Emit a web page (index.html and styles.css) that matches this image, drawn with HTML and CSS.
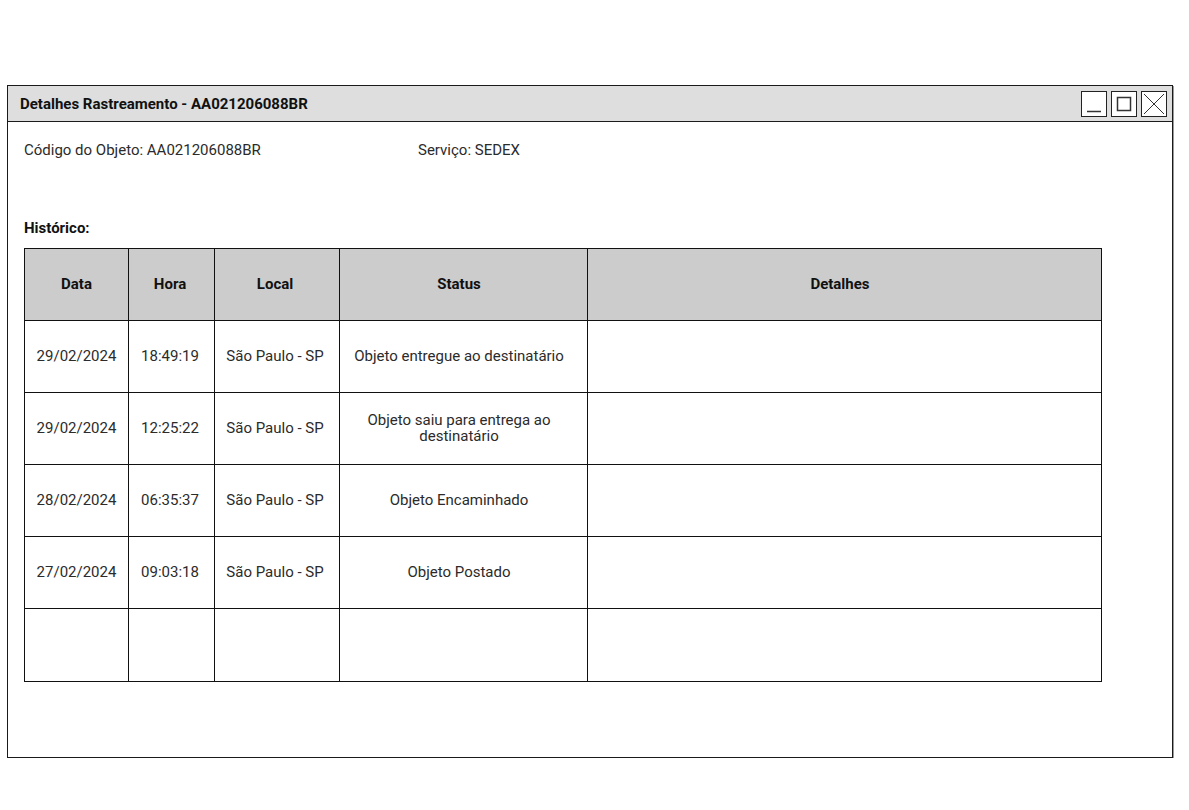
FILE: index.html
```html
<!DOCTYPE html>
<html lang="pt-BR">
<head>
<meta charset="utf-8">
<title>Detalhes Rastreamento</title>
<link rel="stylesheet" href="styles.css">
</head>
<body>
<div class="window">
  <div class="titlebar">
    <span class="title">Detalhes Rastreamento - AA021206088BR</span>
    <div class="controls">
      <span class="btn"><svg width="24" height="24" viewBox="0 0 24 24"><path d="M5 19.5H19" stroke="#333" stroke-width="1.5" fill="none"/></svg></span>
      <span class="btn"><svg width="24" height="24" viewBox="0 0 24 24"><rect x="5.5" y="5.5" width="13" height="13" stroke="#333" stroke-width="1.5" fill="none"/></svg></span>
      <span class="btn"><svg width="24" height="24" viewBox="0 0 24 24"><path d="M2 2L22 22M22 2L2 22" stroke="#333" stroke-width="1" fill="none"/></svg></span>
    </div>
  </div>
  <div class="content">
    <div class="info">
      <span class="info-code">Código do Objeto: AA021206088BR</span>
      <span class="info-service">Serviço: SEDEX</span>
    </div>
    <div class="section-label">Histórico:</div>
    <table class="history">
      <colgroup>
        <col class="c-data"><col class="c-hora"><col class="c-local"><col class="c-status"><col class="c-det">
      </colgroup>
      <thead>
        <tr><th class="k-data">Data</th><th class="k-hora">Hora</th><th class="k-local">Local</th><th class="k-wide">Status</th><th class="k-wide">Detalhes</th></tr>
      </thead>
      <tbody>
        <tr><td class="k-data">29/02/2024</td><td class="k-hora">18:49:19</td><td class="k-local">São Paulo - SP</td><td class="k-wide">Objeto entregue ao destinatário</td><td class="k-wide"></td></tr>
        <tr><td class="k-data">29/02/2024</td><td class="k-hora">12:25:22</td><td class="k-local">São Paulo - SP</td><td class="k-wide">Objeto saiu para entrega ao destinatário</td><td class="k-wide"></td></tr>
        <tr><td class="k-data">28/02/2024</td><td class="k-hora">06:35:37</td><td class="k-local">São Paulo - SP</td><td class="k-wide">Objeto Encaminhado</td><td class="k-wide"></td></tr>
        <tr><td class="k-data">27/02/2024</td><td class="k-hora">09:03:18</td><td class="k-local">São Paulo - SP</td><td class="k-wide">Objeto Postado</td><td class="k-wide"></td></tr>
        <tr class="last"><td></td><td></td><td></td><td></td><td></td></tr>
      </tbody>
    </table>
  </div>
</div>
</body>
</html>
```

FILE: styles.css
```css
html, body {
  margin: 0;
  padding: 0;
  background: #fff;
}
body {
  font-family: Roboto, "Liberation Sans", Arial, sans-serif;
  color: #2b2b2b;
  padding: 85px 0 0 7px;
}
.window {
  box-sizing: border-box;
  width: 1166px;
  height: 673px;
  border: 1px solid #1a1a1a;
  box-shadow: 1px 1px 0 #9a9a9a;
  display: flex;
  flex-direction: column;
}
.titlebar {
  box-sizing: border-box;
  height: 36px;
  background: #dedede;
  border-bottom: 1px solid #1a1a1a;
  display: flex;
  align-items: center;
  justify-content: space-between;
  padding: 0 5px 0 12px;
}
.title {
  font-size: 15px;
  font-weight: 700;
  color: #111;
}
.controls {
  display: flex;
  gap: 4px;
  margin-top: 1px;
}
.btn {
  display: block;
  width: 24px;
  height: 24px;
  border: 1px solid #222;
  background: #fff;
}
.btn svg {
  display: block;
}
.content {
  padding: 19px 0 0 16px;
}
.info {
  display: flex;
  font-size: 15px;
  line-height: 18px;
}
.info-code {
  width: 394px;
}
.section-label {
  margin-top: 60px;
  font-size: 15px;
  font-weight: 700;
  line-height: 18px;
  color: #111;
}
.history {
  margin-top: 11px;
  border-collapse: collapse;
  table-layout: fixed;
  width: 1078px;
  font-size: 15px;
}
.c-data { width: 104px; }
.c-hora { width: 86px; }
.c-local { width: 125px; }
.c-status { width: 248px; }
.c-det { width: 514px; }
.history th,
.history td {
  border: 1px solid #111;
  height: 72px;
  padding: 0 8px 2px;
  text-align: center;
  vertical-align: middle;
  line-height: 16px;
  box-sizing: border-box;
}
.history .k-hora {
  padding-left: 5px;
  padding-right: 8px;
}
.history .k-local {
  padding-left: 4px;
  padding-right: 8px;
}
.history .k-wide {
  padding-left: 3px;
  padding-right: 12px;
}
.history th {
  background: #cccccc;
  font-weight: 700;
  color: #111;
}
.history tr.last td {
  height: 73px;
}
```
